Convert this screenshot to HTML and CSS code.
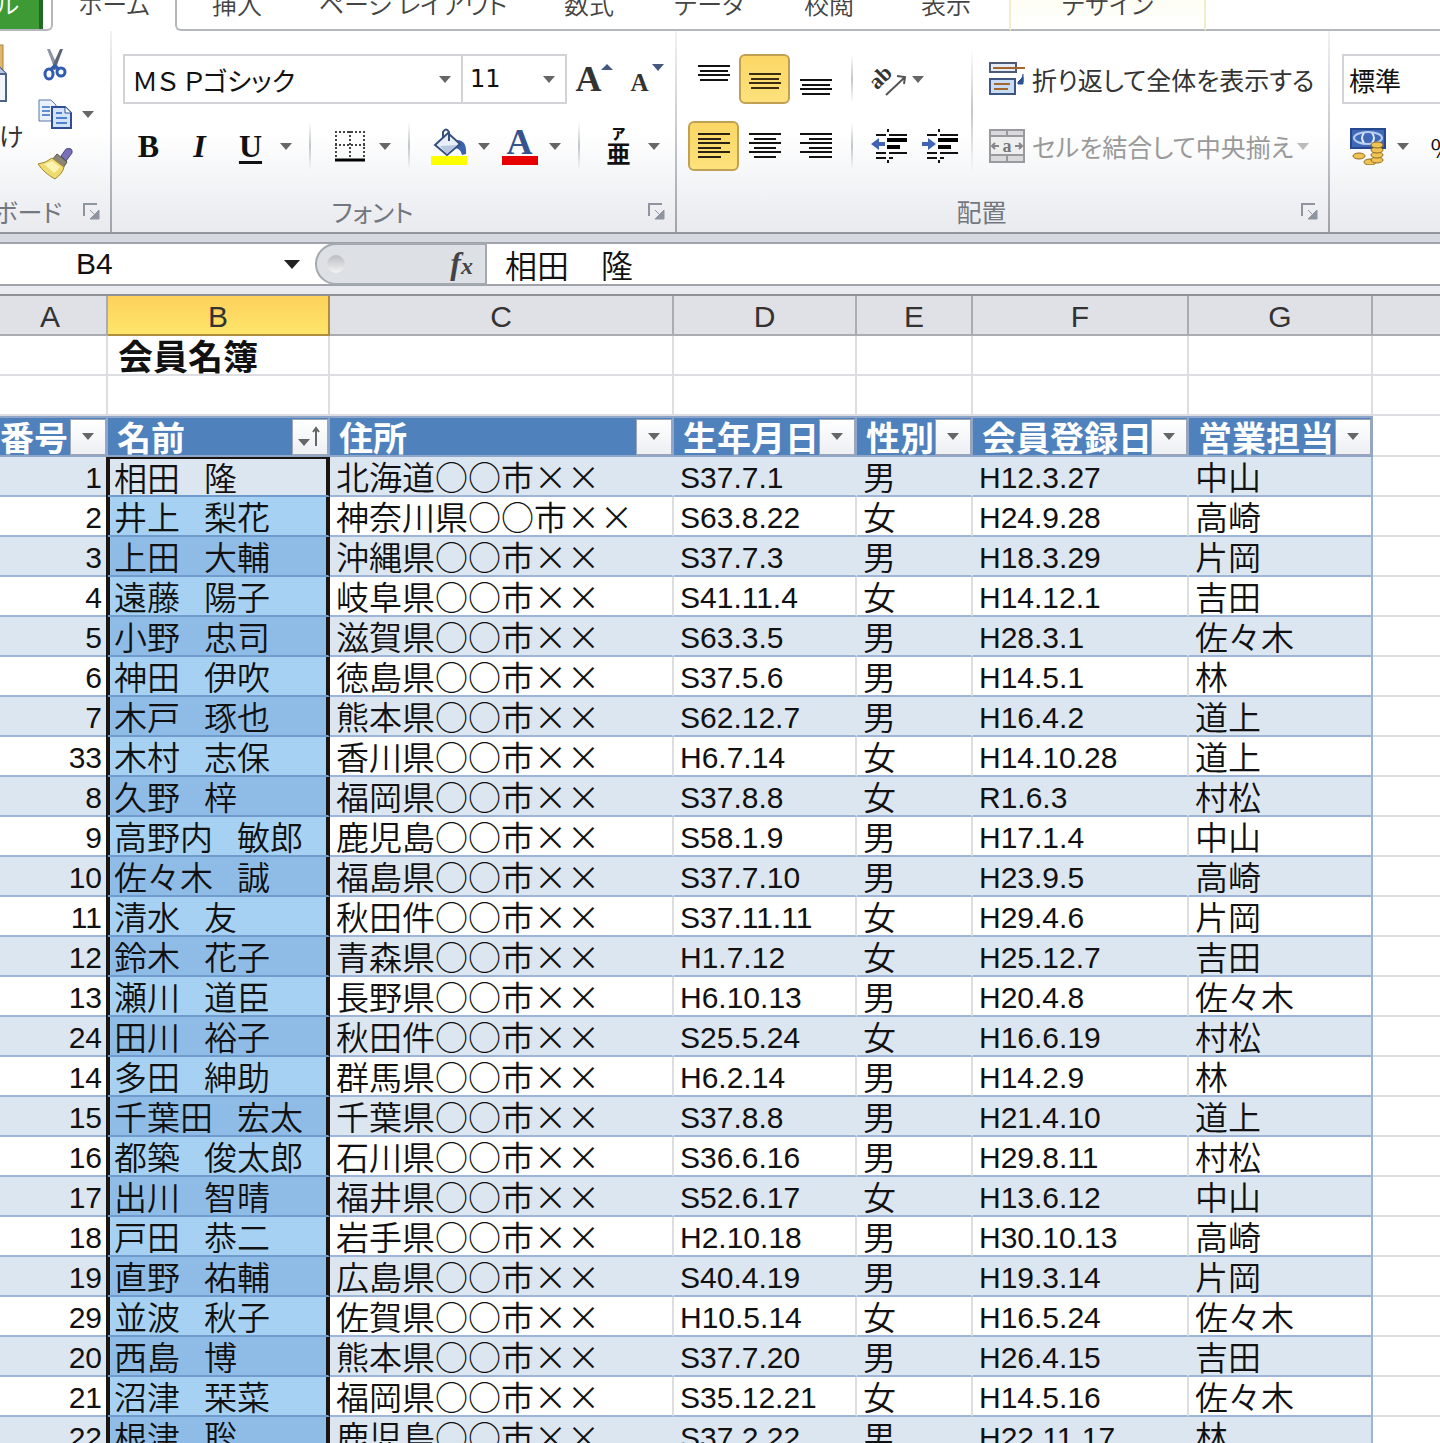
FILE: index.html
```
<!DOCTYPE html>
<html lang="ja">

<head>
    <meta charset="UTF-8">
    <meta name="viewport" content="width=device-width, initial-scale=1">
    <title>会員名簿</title>
    <link rel="stylesheet" href="styles.css">
</head>

<body>

    <nav class="tabs">
        <a class="tab file" href="#">ファイル</a>
        <a class="tab home" href="#">ホーム</a>
        <a class="tab insert" href="#">挿入</a>
        <a class="tab layout" href="#">ページ レイアウト</a>
        <a class="tab formula" href="#">数式</a>
        <a class="tab data" href="#">データ</a>
        <a class="tab review" href="#">校閲</a>
        <a class="tab view" href="#">表示</a>
        <a class="tab design" href="#">デザイン</a>
        <span class="tab-rest"></span>
    </nav>

    <div class="ribbon">
        <!-- クリップボード -->
        <section class="group clipboard">
            <div class="clip-body">
                <button class="paste" aria-label="貼り付け">
                    <svg width="36" height="66" viewBox="0 0 36 66">
                        <rect x="0" y="4" width="31" height="40" fill="#e3b566" stroke="#a9804a" stroke-width="1" />
                        <path d="M8 26h19l7 7v27H8z" fill="#f2f6fc" stroke="#4c6288" stroke-width="2" />
                        <path d="M27 26v7h7" fill="#b9c8e2" stroke="#4c6288" stroke-width="2" />
                    </svg>
                    <span>貼り付け</span>
                </button>
                <div class="clip-icons">
                    <button class="clip-btn" aria-label="切り取り">
                        <svg width="24" height="34" viewBox="0 0 24 34">
                            <path d="M4 2h3l9 20-4 1z" fill="#8d96a6" />
                            <path d="M20 2h-3L8 22l4 1z" fill="#5c6577" />
                            <ellipse cx="6" cy="27" rx="4" ry="5" fill="none" stroke="#2f5cb0" stroke-width="3" />
                            <ellipse cx="18" cy="25" rx="4" ry="4" fill="none" stroke="#2f5cb0" stroke-width="3" />
                            <path d="M8 22l4-3 4 3" fill="none" stroke="#2f5cb0" stroke-width="3" />
                        </svg>
                    </button>
                    <div class="clip-row">
                        <button class="clip-btn" aria-label="コピー">
                            <svg width="34" height="30" viewBox="0 0 34 30">
                                <path d="M1 1h12l5 5v16H1z" fill="#eaf1fb" stroke="#5b78ab" stroke-width="1" />
                                <path d="M4 8h8M4 12h8M4 16h8" stroke="#5f8fd0" stroke-width="2" />
                                <path d="M14 8h13l6 6v15H14z" fill="#d3e3f8" stroke="#2e4f94" stroke-width="2" />
                                <path d="M27 8v6h6" fill="#fff" stroke="#2e4f94" stroke-width="1" />
                                <path d="M18 14h6M18 19h11M18 24h11" stroke="#4f82cc" stroke-width="2" />
                            </svg>
                        </button>
                        <button class="arrow" aria-label="コピーのオプション"></button>
                    </div>
                    <button class="clip-btn" aria-label="書式のコピー">
                        <svg width="38" height="34" viewBox="0 0 38 34">
                            <path d="M25 9l5-7q7-2 6 4l-6 8z" fill="#7a70b8" stroke="#4d4785" stroke-width="1" />
                            <path d="M21 7l10 8-4 6-11-8z" fill="#8b8577" stroke="#5b543f" stroke-width="1" />
                            <path d="M16 11l12 9q-1 6-9 12Q8 26 2 17q8-1 14-6z" fill="#f0dc6e" stroke="#a08430" stroke-width="1" />
                            <path d="M8 17q5-1 8-3l8 6q-3 4-6 6z" fill="#fbf3b4" />
                        </svg>
                    </button>
                </div>
            </div>
            <footer class="group-foot">
                <span class="group-name">クリップボード</span>
                <button class="launcher" aria-label="クリップボードの設定"><svg width="18" height="18" viewBox="0 0 18 18"><path d="M2 14V2h13" fill="none" stroke="#8f959e" stroke-width="2" /><path d="M8 8l5 5M17 8v9H8z" fill="#8f959e" stroke="#8f959e" stroke-width="1" /></svg></button>
            </footer>
        </section>

        <!-- フォント -->
        <section class="group font">
            <div class="rows">
                <div class="row">
                    <label class="combo combo-font"><select aria-label="フォント"><option>ＭＳ Ｐゴシック</option></select></label>
                    <label class="combo combo-size"><select aria-label="フォント サイズ"><option>11</option></select></label>
                    <button class="btn grow" aria-label="フォント サイズの拡大"><span class="big-a">A</span><i class="tri-up"></i></button>
                    <button class="btn grow" aria-label="フォント サイズの縮小"><span class="small-a">A</span><i class="tri-down"></i></button>
                </div>
                <div class="row">
                    <button class="btn letter"><b>B</b></button>
                    <button class="btn letter"><em>I</em></button>
                    <button class="btn letter"><u>U</u></button>
                    <button class="arrow" aria-label="下線の種類"></button>
                    <i class="sep"></i>
                    <button class="btn" aria-label="罫線">
                        <svg width="32" height="32" viewBox="0 0 32 32">
                            <path d="M1 2h30M1 15h30M2 1v26M16 1v26M30 1v26" fill="none" stroke="#444" stroke-width="2" stroke-dasharray="2 2" />
                            <path d="M1 30h30" stroke="#000" stroke-width="3" />
                        </svg>
                    </button>
                    <button class="arrow" aria-label="罫線の種類"></button>
                    <i class="sep"></i>
                    <button class="btn" aria-label="塗りつぶしの色">
                        <svg width="38" height="38" viewBox="0 0 38 38">
                            <path d="M27 13q10 0 9 14l-4 1q-1-6-7-7z" fill="#3d63ad" />
                            <path d="M5 18L18 6l12 11-13 11z" fill="#e9eff8" stroke="#35507f" stroke-width="2" />
                            <path d="M10 19l17-1-10 9z" fill="#b6c6e0" />
                            <path d="M13 11V5q3-5 6 0v9" fill="none" stroke="#35507f" stroke-width="2" />
                            <rect x="1" y="29" width="36" height="9" fill="#ff0" />
                        </svg>
                    </button>
                    <button class="arrow" aria-label="塗りつぶしの色の選択"></button>
                    <button class="btn font-color" aria-label="フォントの色"><span>A</span></button>
                    <button class="arrow" aria-label="フォントの色の選択"></button>
                    <i class="sep"></i>
                    <button class="btn ruby" aria-label="ふりがなの表示"><span>ア</span><span class="ruby-base">亜</span></button>
                    <button class="arrow" aria-label="ふりがなの設定"></button>
                </div>
            </div>
            <footer class="group-foot">
                <span class="group-name">フォント</span>
                <button class="launcher" aria-label="フォントの設定"><svg width="18" height="18" viewBox="0 0 18 18"><path d="M2 14V2h13" fill="none" stroke="#8f959e" stroke-width="2" /><path d="M8 8l5 5M17 8v9H8z" fill="#8f959e" stroke="#8f959e" stroke-width="1" /></svg></button>
            </footer>
        </section>

        <!-- 配置 -->
        <section class="group align">
            <div class="align-body">
                <div class="rows">
                    <div class="row">
                        <button class="btn" aria-label="上揃え"><svg width="32" height="32" viewBox="0 0 32 32"><path d="M0 3h32M2 8h28M0 12h32M2 17h28" stroke="#111" stroke-width="2" /></svg></button>
                        <button class="btn on" aria-label="上下中央揃え"><svg width="32" height="32" viewBox="0 0 32 32"><path d="M0 11h32M2 16h28M0 20h32M2 25h28" stroke="#3a2c10" stroke-width="2" /></svg></button>
                        <button class="btn" aria-label="下揃え"><svg width="32" height="32" viewBox="0 0 32 32"><path d="M0 17h32M2 22h28M0 26h32M2 31h28" stroke="#111" stroke-width="2" /></svg></button>
                        <i class="sep"></i>
                        <button class="btn" aria-label="方向">
                            <svg width="36" height="36" viewBox="0 0 36 36">
                                <text class="ab" x="4" y="27" transform="rotate(-45 8 26)">ab</text>
                                <path d="M15 34L33 17M26 15l8 1-1 7" fill="none" stroke="#555" stroke-width="2" />
                            </svg>
                        </button>
                        <button class="arrow tight" aria-label="方向の選択"></button>
                    </div>
                    <div class="row">
                        <button class="btn on" aria-label="左揃え"><svg width="32" height="28" viewBox="0 0 32 28"><path d="M0 2h32M0 7h23M0 11h32M0 16h23M0 20h32M0 25h23" stroke="#2a2210" stroke-width="2" /></svg></button>
                        <button class="btn" aria-label="中央揃え"><svg width="32" height="28" viewBox="0 0 32 28"><path d="M0 2h32M5 7h22M0 11h32M5 16h22M0 20h32M5 25h22" stroke="#111" stroke-width="2" /></svg></button>
                        <button class="btn" aria-label="右揃え"><svg width="32" height="28" viewBox="0 0 32 28"><path d="M0 2h32M9 7h23M0 11h32M9 16h23M0 20h32M9 25h23" stroke="#111" stroke-width="2" /></svg></button>
                        <i class="sep"></i>
                        <button class="btn" aria-label="インデントを減らす">
                            <svg width="38" height="36" viewBox="0 0 38 36">
                                <path d="M18 1v3M18 32v3M6 7h10M19 7h18M6 25h10M19 25h18M6 30h10M19 30h4" stroke="#111" stroke-width="2" />
                                <path d="M17 12h20M17 19h13" stroke="#000" stroke-width="4" />
                                <path d="M1 16l8-6v4h6v4H9v4z" fill="#3f63b5" />
                            </svg>
                        </button>
                        <button class="btn" aria-label="インデントを増やす">
                            <svg width="38" height="36" viewBox="0 0 38 36">
                                <path d="M18 1v3M18 32v3M6 7h10M19 7h18M6 25h10M19 25h18M6 30h10M19 30h4" stroke="#111" stroke-width="2" />
                                <path d="M17 12h20M17 19h13" stroke="#000" stroke-width="4" />
                                <path d="M15 16l-8-6v4H1v4h6v4z" fill="#3f63b5" />
                            </svg>
                        </button>
                    </div>
                </div>
                <i class="sep tall"></i>
                <div class="rows">
                    <button class="row wide">
                        <svg width="36" height="34" viewBox="0 0 36 34">
                            <rect x="1" y="1" width="26" height="9" fill="#e6ecf5" stroke="#4b5b78" stroke-width="2" />
                            <path d="M4 6h32" stroke="#a3662c" stroke-width="2" />
                            <rect x="1" y="17" width="25" height="15" fill="#c9dcf5" stroke="#3e5684" stroke-width="2" />
                            <path d="M5 22h16M5 27h14" stroke="#a3662c" stroke-width="2" />
                            <path d="M34 12v8h-3M29 20l5-5v7h-5z" fill="#2d5290" stroke="#2d5290" stroke-width="1" />
                        </svg>
                        <span>折り返して全体を表示する</span>
                    </button>
                    <div class="row">
                        <button class="row wide off" disabled>
                            <svg width="36" height="34" viewBox="0 0 36 34">
                                <rect x="1" y="1" width="34" height="32" fill="#d9d9dc" stroke="#9a9a9e" stroke-width="2" />
                                <path d="M1 7h34M1 26h34M18 1v6M18 26v7" stroke="#9a9a9e" stroke-width="2" />
                                <rect x="2" y="8" width="32" height="17" fill="#eee" />
                                <path d="M3 17h7M6 14l-3 3 3 3M33 17h-7M30 14l3 3-3 3" fill="none" stroke="#85858a" stroke-width="2" />
                                <text class="merge-a" x="18" y="23">a</text>
                            </svg>
                            <span>セルを結合して中央揃え</span>
                        </button>
                        <button class="arrow pale" aria-label="結合の種類" disabled></button>
                    </div>
                </div>
            </div>
            <footer class="group-foot">
                <span class="group-name">配置</span>
                <button class="launcher" aria-label="配置の設定"><svg width="18" height="18" viewBox="0 0 18 18"><path d="M2 14V2h13" fill="none" stroke="#8f959e" stroke-width="2" /><path d="M8 8l5 5M17 8v9H8z" fill="#8f959e" stroke="#8f959e" stroke-width="1" /></svg></button>
            </footer>
        </section>

        <!-- 数値 -->
        <section class="group number">
            <div class="rows">
                <div class="row">
                    <label class="combo combo-number"><select aria-label="表示形式"><option>標準</option></select></label>
                </div>
                <div class="row">
                    <button class="btn" aria-label="通貨表示形式">
                        <svg width="36" height="38" viewBox="0 0 36 38">
                            <rect x="1" y="2" width="34" height="19" fill="#3f68b8" stroke="#27488c" stroke-width="2" />
                            <ellipse cx="18" cy="11" rx="14" ry="6" fill="none" stroke="#b9cdf0" stroke-width="2" />
                            <path d="M14 6q-4 5 0 10M22 6q4 5 0 10" fill="none" stroke="#dfe9fa" stroke-width="2" />
                            <g fill="#f0c454" stroke="#8f6a1c" stroke-width="1">
                                <ellipse cx="20" cy="35" rx="6" ry="3" />
                                <ellipse cx="9" cy="29" rx="6" ry="3" />
                                <ellipse cx="27" cy="33" rx="6" ry="3" />
                                <ellipse cx="27" cy="28" rx="6" ry="3" />
                                <ellipse cx="27" cy="23" rx="6" ry="3" />
                                <ellipse cx="27" cy="18" rx="6" ry="3" />
                            </g>
                        </svg>
                    </button>
                    <button class="arrow" aria-label="通貨の選択"></button>
                    <button class="btn percent">%</button>
                </div>
            </div>
        </section>
    </div>

    <div class="formula-bar">
        <input class="name-box" aria-label="名前ボックス" value="B4">
        <button class="arrow dark" aria-label="名前の一覧"></button>
        <div class="fx-area">
            <i class="knob"></i>
            <button class="fx" aria-label="関数の挿入">f<small>x</small></button>
        </div>
        <input class="formula-input" aria-label="数式バー" value="相田　隆">
    </div>

    <table class="sheet" id="sheet">
        <colgroup>
            <col class="col-a">
            <col class="col-b">
            <col class="col-c">
            <col class="col-d">
            <col class="col-e">
            <col class="col-f">
            <col class="col-g">
            <col>
        </colgroup>
        <thead>
            <tr class="letters">
                <th>A</th>
                <th class="current">B</th>
                <th>C</th>
                <th>D</th>
                <th>E</th>
                <th>F</th>
                <th>G</th>
                <th></th>
            </tr>
            <tr class="blank">
                <td></td>
                <td class="title">会員名簿</td>
                <td></td>
                <td></td>
                <td></td>
                <td></td>
                <td></td>
                <td></td>
            </tr>
            <tr class="blank">
                <td></td>
                <td></td>
                <td></td>
                <td></td>
                <td></td>
                <td></td>
                <td></td>
                <td></td>
            </tr>
            <tr class="fields">
                <th><div class="field"><span>番号</span><button class="filter" aria-label="番号のフィルター"></button></div></th>
                <th><div class="field"><span>名前</span><button class="filter sorted" aria-label="名前のフィルター"><svg width="24" height="24" viewBox="0 0 24 24"><path d="M0 14h12l-6 7z" fill="#666" /><path d="M18 21V3M15 7l3-4 3 4" fill="none" stroke="#666" stroke-width="2" /></svg></button></div></th>
                <th><div class="field"><span>住所</span><button class="filter" aria-label="住所のフィルター"></button></div></th>
                <th><div class="field"><span>生年月日</span><button class="filter" aria-label="生年月日のフィルター"></button></div></th>
                <th><div class="field"><span>性別</span><button class="filter" aria-label="性別のフィルター"></button></div></th>
                <th><div class="field"><span>会員登録日</span><button class="filter" aria-label="会員登録日のフィルター"></button></div></th>
                <th><div class="field"><span>営業担当</span><button class="filter" aria-label="営業担当のフィルター"></button></div></th>
                <td class="outside"></td>
            </tr>
        </thead>
        <tbody></tbody>
    </table>

    <script src="script.js"></script>

</body>

</html>
```
FILE: styles.css
```
* {
    box-sizing: border-box;
}

body {
    margin: 0;
    height: 100vh;
    overflow: hidden;
    background: white;
    color: #111;
    font-family: "Noto Sans CJK JP", sans-serif;
    font-weight: 350;
}

button,
input,
select {
    margin: 0;
    padding: 0;
    border: none;
    background: none;
    color: inherit;
    font: inherit;
}

button {
    display: flex;
    align-items: center;
    justify-content: center;
    flex: none;
}

svg {
    display: block;
    flex: none;
}

/* タブ */
.tabs {
    display: flex;
    height: 31px;
    overflow: hidden;
    font-size: 25px;
    line-height: 26px;
    font-feature-settings: "palt";
}

.tab {
    display: flex;
    flex: none;
    align-items: flex-end;
    justify-content: center;
    padding-bottom: 13px;
    border-bottom: 2px solid #b4b7bc;
    color: #444;
    text-decoration: none;
    white-space: nowrap;
}

.file {
    width: 53px;
    justify-content: flex-end;
    padding-right: 32px;
    color: white;
    border-right: 2px solid #b4b7bc;
    border-bottom-right-radius: 6px;
    background: linear-gradient(to right, #3d9a35 39px, #1f6b24 39px, #1f6b24 43px, white 43px);
}

.home {
    width: 122px;
    border-bottom-color: white;
}

.insert {
    width: 122px;
    border-left: 2px solid #b4b7bc;
    border-bottom-left-radius: 6px;
}

.layout {
    width: 232px;
}

.formula {
    width: 120px;
}

.data {
    width: 120px;
}

.review {
    width: 120px;
}

.view {
    width: 122px;
    padding-right: 6px;
    border-right: 2px solid #f0eecb;
}

.design {
    width: 195px;
    border-right: 2px solid #f0eecb;
    background: linear-gradient(#fefef4, white);
}

.tab-rest {
    flex: 1;
    border-bottom: 2px solid #b4b7bc;
}

/* リボン */
.ribbon {
    display: flex;
    height: 203px;
    overflow: hidden;
    border-bottom: 2px solid #92959b;
    background: linear-gradient(white 50%, #e8eaee);
}

.group {
    display: flex;
    flex: none;
    flex-direction: column;
    justify-content: space-between;
    border-right: 2px solid;
    border-image: linear-gradient(#f2f2f4, #9ea2a9) 1;
}

.clipboard {
    width: 112px;
    overflow: hidden;
}

.font {
    width: 565px;
}

.align {
    width: 653px;
}

.number {
    width: 300px;
}

.rows {
    display: flex;
    flex-direction: column;
    gap: 17px;
    padding-top: 23px;
}

.font .rows {
    padding-left: 11px;
}

.number .rows {
    padding-left: 12px;
}

.align-body {
    display: flex;
    padding-left: 11px;
}

.row {
    display: flex;
    align-items: center;
    height: 50px;
}

.btn {
    position: relative;
    width: 51px;
    height: 50px;
    border-radius: 6px;
}

.on {
    border: 2px solid #c0a052;
    background: linear-gradient(#fbd765, #fde17c);
}

.arrow {
    width: 20px;
    height: 50px;
}

.arrow::before,
.combo::after,
.filter:not(.sorted)::before {
    content: "";
    border: 6px solid transparent;
    border-top: 7px solid #666;
    border-bottom: none;
}

.arrow.pale::before {
    border-top-color: #bbb;
}

.arrow.tight {
    width: 8px;
}

.arrow.dark::before {
    border-width: 9px 8px 0;
    border-top-color: #222;
}

.sep {
    flex: none;
    width: 2px;
    height: 48px;
    margin: 0 13px;
    background: linear-gradient(transparent, #c2c5ca, transparent);
}

.align .sep {
    margin: 0 10px;
}

.align .tall {
    height: 124px;
    margin: 18px 16px 0 6px;
}

.combo {
    position: relative;
    display: flex;
    height: 50px;
    border: 2px solid #d2d3d6;
    background: white;
    font-size: 26px;
    font-weight: 400;
    font-feature-settings: "palt";
}

.combo::after {
    position: absolute;
    top: 20px;
    right: 10px;
}

.combo select {
    width: 100%;
    padding-left: 7px;
    appearance: none;
}

.combo-font {
    width: 340px;
}

.combo-size {
    width: 104px;
    border-left: none;
    font-family: "DejaVu Sans", sans-serif;
    font-size: 24px;
}

.combo-number {
    width: 180px;
}

.combo-number select {
    padding-left: 5px;
}

.grow {
    font-family: "Liberation Serif", serif;
    font-weight: bold;
    color: #333;
}

.big-a {
    font-size: 36px;
}

.small-a {
    padding-top: 8px;
    font-size: 25px;
}

.tri-up,
.tri-down {
    position: absolute;
    top: 10px;
    right: 5px;
    border: 6px solid transparent;
}

.tri-up {
    border-top: none;
    border-bottom: 6px solid #45597f;
}

.tri-down {
    border-bottom: none;
    border-top: 7px solid #45597f;
}

.grow {
    padding-right: 8px;
}

.letter {
    font-family: "Liberation Serif", serif;
    font-size: 32px;
    font-weight: bold;
}

.letter u {
    text-decoration-thickness: 3px;
    text-underline-offset: 4px;
}

.font-color span {
    width: 36px;
    border-bottom: 9px solid #e60000;
    color: #34538f;
    font-family: "Liberation Serif", serif;
    font-size: 36px;
    font-weight: bold;
    line-height: 28px;
}

.ruby {
    flex-direction: column;
    font-size: 14px;
    font-weight: 900;
    line-height: 14px;
}

.ruby-base {
    font-size: 24px;
    font-weight: 700;
    line-height: 26px;
}

.ab {
    font: bold 22px "Liberation Serif", serif;
    fill: #333;
}

.merge-a {
    font: bold 18px "Liberation Serif", serif;
    fill: #777;
    text-anchor: middle;
}

.wide {
    gap: 7px;
    color: #333;
    font-size: 25px;
    font-weight: 400;
    font-feature-settings: "palt";
    white-space: nowrap;
}

.off {
    color: #999;
}

.percent {
    padding-left: 8px;
    font-size: 26px;
}

.group-foot {
    display: flex;
    align-items: center;
    height: 42px;
    padding-right: 10px;
    color: #73777f;
    font-size: 25px;
    font-weight: 400;
    line-height: 40px;
    font-feature-settings: "palt";
}

.group-name {
    flex: 1;
    padding-right: 14px;
    text-align: center;
}

.clipboard .group-foot {
    justify-content: flex-end;
    gap: 20px;
}

.clipboard .group-name {
    flex: none;
    padding: 0;
}

.clip-body {
    display: flex;
    justify-content: flex-end;
    padding-top: 8px;
}

.paste {
    flex-direction: column;
    align-self: flex-start;
    align-items: flex-end;
    gap: 10px;
    padding-top: 2px;
    color: #333;
    font-size: 25px;
    font-weight: 400;
    line-height: 36px;
    white-space: nowrap;
}

.paste svg {
    margin-right: 16px;
}

.clip-icons {
    display: flex;
    flex: none;
    flex-direction: column;
    width: 86px;
    padding-left: 12px;
}

.clip-row {
    display: flex;
}

.clip-btn {
    width: 38px;
    height: 50px;
}

.clip-row .arrow {
    width: 28px;
}

/* 数式バー */
.formula-bar {
    display: flex;
    align-items: center;
    height: 60px;
    border-top: 8px solid #d6d9df;
    border-bottom: 8px solid #e9ebf1;
    background: white;
    box-shadow: inset 0 2px #9fa3aa, inset 0 -2px #9fa3aa;
}

.name-box {
    width: 282px;
    padding-left: 76px;
    font-family: "Liberation Sans", sans-serif;
    font-size: 30px;
}

.fx-area {
    display: flex;
    align-items: center;
    justify-content: space-between;
    width: 172px;
    height: 42px;
    margin-left: 13px;
    padding: 0 12px 0 10px;
    border: 2px solid #a4a8af;
    border-radius: 21px 0 0 21px;
    background: #dde0e5;
}

.knob {
    width: 18px;
    height: 18px;
    border-radius: 50%;
    background: linear-gradient(#b9bcc2, #f3f4f6);
}

.fx {
    align-items: baseline;
    font-family: "Liberation Serif", serif;
    font-size: 32px;
    font-style: italic;
    font-weight: bold;
    line-height: 34px;
    color: #444;
}

.fx small {
    font-size: 24px;
}

.formula-input {
    flex: 1;
    min-width: 0;
    height: 40px;
    padding-left: 18px;
    font-size: 32px;
}

/* シート */
.sheet {
    width: 100%;
    table-layout: fixed;
    border-collapse: separate;
    border-spacing: 0;
    border-top: 2px solid #8f9299;
}

.col-a { width: 108px; }
.col-b { width: 222px; }
.col-c { width: 344px; }
.col-d { width: 183px; }
.col-e { width: 116px; }
.col-f { width: 216px; }
.col-g { width: 184px; }

.sheet td,
.sheet th {
    height: 40px;
    padding: 0 0 0 6px;
    overflow: hidden;
    border-right: 2px solid #dcdee2;
    border-bottom: 2px solid #dcdee2;
    font-size: 33px;
    line-height: 38px;
    text-align: left;
    white-space: nowrap;
}

.sheet .letters th {
    padding: 4px 0 0;
    border-color: #a9acb2;
    background: #dfe1e6;
    color: #333;
    font-family: "Liberation Sans", sans-serif;
    font-size: 30px;
    font-weight: 400;
    line-height: 34px;
    text-align: center;
}

.sheet .letters th:first-child {
    padding-right: 6px;
}

.sheet .letters .current {
    border-color: #b08d3c;
    background: linear-gradient(#fdd15c, #fee56a);
}

.sheet .blank .title {
    padding-left: 10px;
    font-size: 35px;
    font-weight: 700;
}

.sheet .fields th {
    height: 41px;
    padding: 0;
    border-top: 2px solid #8b9dba;
    border-color: #8fa6c9;
    background: #4f81bd;
    color: white;
    font-size: 34px;
    font-weight: 700;
}

.field {
    display: flex;
    align-items: center;
    height: 37px;
}

.field span {
    flex: 1;
    padding-left: 9px;
    overflow: hidden;
    line-height: 37px;
}

.fields th:first-child span {
    padding-left: 0;
}

.filter {
    width: 36px;
    height: 36px;
    border: 1px solid #9da6b5;
    background: linear-gradient(white, #eeeff3);
}

/* データ行 */
.sheet tbody td {
    border-bottom-color: #9db5d6;
}

.sheet tbody tr:nth-child(odd) td {
    border-right-color: #dce6f1;
    background: #dce6f1;
}

.sheet tbody .num {
    padding-right: 4px;
    text-align: right;
}

.sheet tbody .num,
.sheet tbody .date {
    padding-top: 4px;
    font-family: "Liberation Sans", sans-serif;
    font-size: 30px;
    line-height: 34px;
}

.sheet tbody td.name {
    border-bottom-color: #6f9ccc;
    border-right-color: #1b140f;
    background: #a6d1f3;
    box-shadow: -2px 0 #1b140f, inset 2px 0 #1b140f, inset -2px 0 #1b140f;
}

.sheet tbody tr:nth-child(odd) td.name {
    border-right-color: #1b140f;
    background: #8fbce6;
}

.sheet tbody tr:first-child td.name {
    border-top: 2px solid #1b140f;
    background: #dce6f1;
    line-height: 36px;
}

.name .space {
    font-size: 24px;
    line-height: 24px;
}

.sheet tbody td.staff,
.sheet tbody tr:nth-child(odd) td.staff {
    border-right-color: #9db5d6;
}

.sheet tbody tr td.outside,
.sheet tbody tr:nth-child(odd) td.outside {
    border-bottom-color: #dcdee2;
    background: white;
}

.sheet tr > :last-child {
    border-right: none;
}
```
FILE: script.js
```
const members = [
    [1, "相田　隆", "北海道", "S37.7.1", "男", "H12.3.27", "中山"],
    [2, "井上　梨花", "神奈川県", "S63.8.22", "女", "H24.9.28", "高崎"],
    [3, "上田　大輔", "沖縄県", "S37.7.3", "男", "H18.3.29", "片岡"],
    [4, "遠藤　陽子", "岐阜県", "S41.11.4", "女", "H14.12.1", "吉田"],
    [5, "小野　忠司", "滋賀県", "S63.3.5", "男", "H28.3.1", "佐々木"],
    [6, "神田　伊吹", "徳島県", "S37.5.6", "男", "H14.5.1", "林"],
    [7, "木戸　琢也", "熊本県", "S62.12.7", "男", "H16.4.2", "道上"],
    [33, "木村　志保", "香川県", "H6.7.14", "女", "H14.10.28", "道上"],
    [8, "久野　梓", "福岡県", "S37.8.8", "女", "R1.6.3", "村松"],
    [9, "高野内　敏郎", "鹿児島", "S58.1.9", "男", "H17.1.4", "中山"],
    [10, "佐々木　誠", "福島県", "S37.7.10", "男", "H23.9.5", "高崎"],
    [11, "清水　友", "秋田件", "S37.11.11", "女", "H29.4.6", "片岡"],
    [12, "鈴木　花子", "青森県", "H1.7.12", "女", "H25.12.7", "吉田"],
    [13, "瀬川　道臣", "長野県", "H6.10.13", "男", "H20.4.8", "佐々木"],
    [24, "田川　裕子", "秋田件", "S25.5.24", "女", "H16.6.19", "村松"],
    [14, "多田　紳助", "群馬県", "H6.2.14", "男", "H14.2.9", "林"],
    [15, "千葉田　宏太", "千葉県", "S37.8.8", "男", "H21.4.10", "道上"],
    [16, "都築　俊太郎", "石川県", "S36.6.16", "男", "H29.8.11", "村松"],
    [17, "出川　智晴", "福井県", "S52.6.17", "女", "H13.6.12", "中山"],
    [18, "戸田　恭二", "岩手県", "H2.10.18", "男", "H30.10.13", "高崎"],
    [19, "直野　祐輔", "広島県", "S40.4.19", "男", "H19.3.14", "片岡"],
    [29, "並波　秋子", "佐賀県", "H10.5.14", "女", "H16.5.24", "佐々木"],
    [20, "西島　博", "熊本県", "S37.7.20", "男", "H26.4.15", "吉田"],
    [21, "沼津　栞菜", "福岡県", "S35.12.21", "女", "H14.5.16", "佐々木"],
    [22, "根津　聡", "鹿児島", "S37.2.22", "男", "H22.11.17", "林"]
];

const tbody = document.querySelector("#sheet tbody");

members.forEach(([id, name, pref, birth, sex, joined, staff]) => {
    const tr = document.createElement("tr");
    tr.innerHTML = `
      <td class="num">${id}</td>
      <td class="name">${name.replace("　", '<span class="space">　</span>')}</td>
      <td>${pref}○○市××</td>
      <td class="date">${birth}</td>
      <td>${sex}</td>
      <td class="date">${joined}</td>
      <td class="staff">${staff}</td>
      <td class="outside"></td>
    `;
    tbody.appendChild(tr);
});
```
